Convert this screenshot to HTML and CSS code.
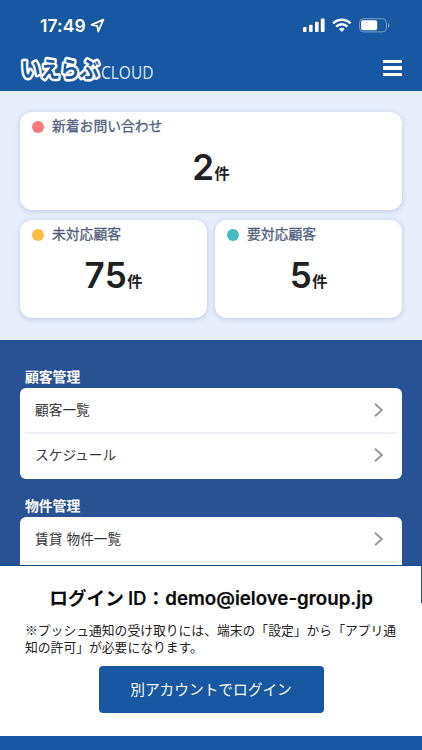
FILE: index.html
```html
<!DOCTYPE html>
<html lang="ja">
<head>
<meta charset="utf-8">
<meta name="viewport" content="width=device-width">
<title>いえらぶCLOUD</title>
<link rel="stylesheet" href="styles.css">
</head>
<body>
<div class="screen">
  <header class="header">
    <div class="status">
      <div class="clock"><span>17:49</span>
        <svg width="15" height="15" viewBox="0 0 15 15"><path d="M13.4 1.6 1.5 6.9l5.8 1 .9 5.7z" fill="none" stroke="#fff" stroke-width="1.7" stroke-linejoin="round"/></svg>
      </div>
      <div class="indicators">
        <svg width="22" height="15" viewBox="0 0 22 15" fill="#fff"><rect x="0" y="9" width="3.6" height="5" rx="1"/><rect x="6" y="6.7" width="3.6" height="7.3" rx="1"/><rect x="12" y="3.7" width="3.6" height="10.3" rx="1"/><rect x="17.8" y="0.5" width="3.8" height="13.5" rx="1"/></svg>
        <svg width="20" height="15" viewBox="0 0 20 15"><g fill="none" stroke="#fff" stroke-width="2.5"><path d="M1.1 5.3a12.6 12.6 0 0 1 17.4 0"/><path d="M4.2 8.6a8.1 8.1 0 0 1 11.2 0"/></g><path d="M9.8 14 6.9 11.1a4.1 4.1 0 0 1 5.8 0z" fill="#fff"/></svg>
        <svg width="31" height="15" viewBox="0 0 31 15"><rect x=".6" y=".7" width="26.8" height="13.2" rx="3.8" fill="none" stroke="#7ea1cd"/><rect x="2.2" y="2.3" width="16" height="10" rx="2" fill="#fff"/><path d="M29 5v4.6c2-.8 2-3.8 0-4.6" fill="#7ea1cd"/></svg>
      </div>
    </div>
    <div class="bar">
      <svg class="logo" width="140" height="36" viewBox="0 0 140 36">
        <text class="logo-mark" x="1" y="22.5" textLength="78" lengthAdjust="spacingAndGlyphs">いえらぶ</text>
        <text class="logo-name" x="81" y="25" textLength="52.5" lengthAdjust="spacingAndGlyphs">CLOUD</text>
      </svg>
      <div class="menu"><i></i><i></i><i></i></div>
    </div>
  </header>
  <section class="summary">
    <div class="card wide"><div class="label"><i class="dot red"></i>新着お問い合わせ</div><div class="count">2<small>件</small></div></div>
    <div class="card"><div class="label"><i class="dot yellow"></i>未対応顧客</div><div class="count">75<small>件</small></div></div>
    <div class="card"><div class="label"><i class="dot teal"></i>要対応顧客</div><div class="count">5<small>件</small></div></div>
  </section>
  <main class="lists">
    <h2>顧客管理</h2>
    <ul>
      <li>顧客一覧<svg class="chev" width="10" height="16" viewBox="0 0 10 16"><path d="m1 1.8 6.8 6.2L1 14.2"/></svg></li>
      <li>スケジュール<svg class="chev" width="10" height="16" viewBox="0 0 10 16"><path d="m1 1.8 6.8 6.2L1 14.2"/></svg></li>
    </ul>
    <h2>物件管理</h2>
    <ul>
      <li class="spaced">賃貸 物件一覧<svg class="chev" width="10" height="16" viewBox="0 0 10 16"><path d="m1 1.8 6.8 6.2L1 14.2"/></svg></li>
      <li></li>
    </ul>
  </main>
  <footer class="login">
    <div class="account"><span class="account-label">ログイン</span><span class="account-id">ID</span><span class="colon">：</span><span class="account-mail">demo@ielove-group.jp</span></div>
    <div class="note"><p>※プッシュ通知の受け取りには、端末の「設定」から「アプリ通</p><p>知の許可」が必要になります。</p></div>
    <button>別アカウントでログイン</button>
    <i class="scrollbar"></i>
  </footer>
  <div class="bottom"></div>
</div>
</body>
</html>
```
FILE: styles.css
```css
* { box-sizing: border-box; }
body, h2, ul, p { margin: 0; padding: 0; }
body { font-family: Inter, "Noto Sans CJK JP", sans-serif; }
svg { display: block; }
.screen { width: 422px; height: 750px; overflow: hidden; display: flex; flex-direction: column; background: #fff; }
.header { height: 91px; background: #1857a1; color: #fff; flex: none; }
.status { height: 50px; padding: 18px 32px 0 40px; display: flex; justify-content: space-between; }
.clock { display: flex; gap: 3px; font-size: 17.5px; font-weight: 600; line-height: 15px; }
.clock span { width: 47px; letter-spacing: .1px; white-space: nowrap; }
.indicators { display: flex; gap: 7px; }
.bar { display: flex; justify-content: space-between; padding: 4px 20px 0; }
.logo { overflow: visible; }
.logo-mark { font: 700 21.5px "Noto Sans CJK JP", sans-serif; fill: #1857a1; stroke: #fff; stroke-width: 5px; stroke-linejoin: round; paint-order: stroke; }
.logo-name { font: 400 18px "Open Sans", sans-serif; fill: #dbe8fa; }
.menu { width: 19px; margin-top: 6px; display: flex; flex-direction: column; gap: 3px; }
.menu i { height: 3.3px; background: #fff; border-radius: .5px; }
.summary { height: 249px; flex: none; background: #e7edfa; padding: 21px 20px 0; display: grid; grid-template-columns: 1fr 1fr; grid-template-rows: 98px 98px; gap: 10px 8px; }
.card { background: #fff; border-radius: 12px; box-shadow: 0 1px 5px rgba(75, 105, 175, .3); }
.wide { grid-column: 1 / 3; }
.label { display: flex; align-items: center; gap: 8px; height: 30px; padding: 0 0 3px 12px; color: #526080; font: 400 13.8px/27px "Noto Sans CJK JP", sans-serif; -webkit-text-stroke: .3px #526080; }
.dot { width: 12px; height: 12px; border-radius: 50%; position: relative; top: 1px; }
.red { background: #fb7979; }
.yellow { background: #fdbb40; }
.teal { background: #42bec1; }
.count { text-align: center; height: 52px; line-height: 51px; font-size: 35px; font-weight: 600; letter-spacing: .5px; color: #202020; white-space: nowrap; }
.count small { font: 700 15.2px "Noto Sans CJK JP", sans-serif; letter-spacing: 0; position: relative; top: -1px; }
.lists { height: 225.5px; flex: none; overflow: hidden; background: #285294; padding: 27px 20px 0; border-bottom: 1px solid #174a92; }
h2 { height: 21px; padding-left: 5px; font: 700 13.8px/18px "Noto Sans CJK JP", sans-serif; color: #fff; }
ul { list-style: none; background: #fff; border-radius: 6px; height: 91px; margin-bottom: 17px; padding: 0 5px; }
li { height: 44px; padding: 0 13px 2px 10px; display: flex; align-items: center; justify-content: space-between; font: 400 13.7px/40px "Noto Sans CJK JP", sans-serif; color: #373737; }
.spaced { word-spacing: 1px; }
.chev { position: relative; top: 1px; }
li + li { height: 47px; padding-bottom: 5px; border-top: 2px solid #eceff5; }
.chev path { fill: none; stroke: #999; stroke-width: 2; }
.login { height: 170.5px; flex: none; position: relative; padding: 17px 25px 0; }
.account { height: 32px; display: flex; justify-content: center; font-size: 18.7px; line-height: 32px; font-weight: 600; color: #090909; white-space: nowrap; }
.account-label { font-weight: 700; }
.account-id { margin-left: 4px; }
.account-mail { -webkit-text-stroke: .2px #090909; }
.note { margin-top: 6px; }
.note p { font: 400 12.8px/17px "Noto Sans CJK JP", sans-serif; color: #222; white-space: nowrap; }
button { display: block; width: 225px; height: 47px; margin: 11px auto 0; border: 0; border-radius: 4px; background: #1857a1; color: #fff; font: 400 14.7px/45px "Noto Sans CJK JP", sans-serif; padding: 0 0 1px; }
.scrollbar { position: absolute; right: 0; top: 0; width: 1px; height: 37px; background: #285294; }
.bottom { flex: 1; background: #1857a1; }
```
